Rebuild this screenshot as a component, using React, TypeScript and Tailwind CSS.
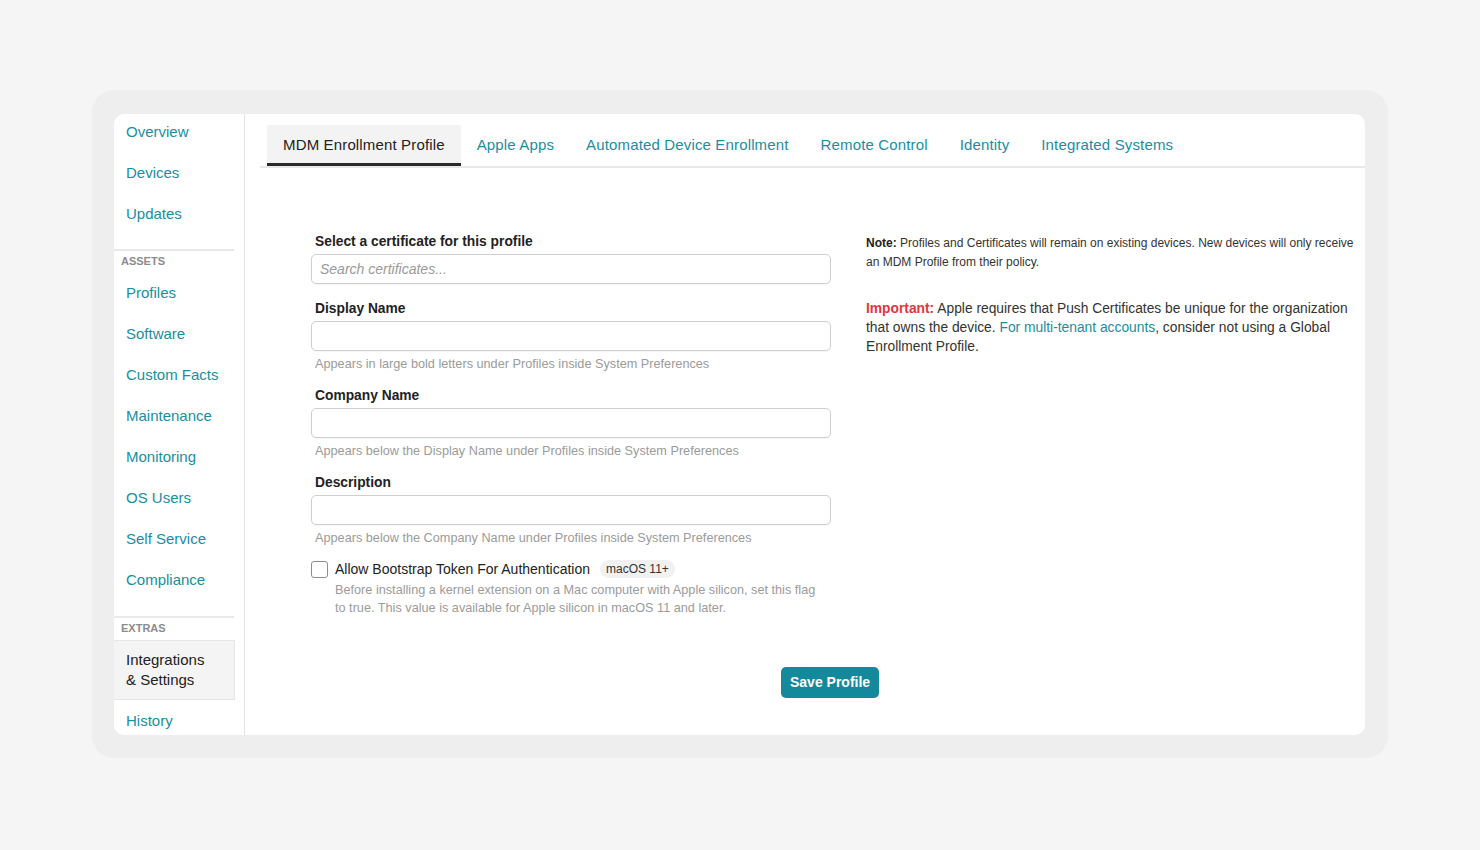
import React from 'react';

const navTop = ['Overview', 'Devices', 'Updates'];
const navAssets = ['Profiles', 'Software', 'Custom Facts', 'Maintenance', 'Monitoring', 'OS Users', 'Self Service', 'Compliance'];
const tabs = ['MDM Enrollment Profile', 'Apple Apps', 'Automated Device Enrollment', 'Remote Control', 'Identity', 'Integrated Systems'];

const NavItem: React.FC<{ label: string }> = ({ label }) => (
  <a className="block pl-3 text-[15px] leading-[18px] text-[#1a8ea1]">{label}</a>
);

const Field: React.FC<{ label: string; placeholder?: string; help?: string; className?: string }> = ({ label, placeholder, help, className }) => (
  <div className={className}>
    <div className="pl-1 text-[13.8px] leading-[18px] font-bold text-[#222]">{label}</div>
    <input
      placeholder={placeholder}
      className="mt-[3px] block h-[30px] w-full rounded-[5px] border border-[#cfcfcf] px-2 text-[14px] italic text-[#333] placeholder:text-[#9a9a9a] shadow-[0_1px_1px_rgba(0,0,0,0.04)] outline-none"
    />
    {help && <div className="mt-[5px] pl-1 text-[12.7px] leading-[16px] text-[#9b9b9b]">{help}</div>}
  </div>
);

export default function App() {
  return (
    <div className="min-h-[850px] bg-[#f5f5f6] pt-[90px] font-['Liberation_Sans',Arial,sans-serif]">
      <div className="ml-[92px] w-[1296px] h-[668px] rounded-[22px] bg-[#eeeeef] pt-[24px] pl-[22px] pr-[23px]">
        <div className="flex h-[621px] overflow-hidden rounded-[10px] bg-white">
          {/* sidebar */}
          <aside className="w-[131px] shrink-0 border-r border-[#e3e3e3] pt-[9px]">
            <div className="flex flex-col gap-[23px]">
              {navTop.map((n) => <NavItem key={n} label={n} />)}
            </div>
            <div className="mt-[26px] mr-[10px] h-[2px] bg-[#e9e9e9]" />
            <div className="mt-[4px] pl-[7px] text-[11px] leading-[12px] font-bold text-[#8c8c8c]">ASSETS</div>
            <div className="mt-[17px] flex flex-col gap-[23px]">
              {navAssets.map((n) => <NavItem key={n} label={n} />)}
            </div>
            <div className="mt-[27px] mr-[10px] h-[2px] bg-[#e9e9e9]" />
            <div className="mt-[4px] pl-[7px] text-[11px] leading-[12px] font-bold text-[#8c8c8c]">EXTRAS</div>
            <div className="mt-[6px] mr-[9px] h-[60px] border border-l-0 border-[#e6e6e6] bg-[#f4f4f5] pl-3 pt-[9px] text-[15px] leading-[20px] text-[#222]">
              Integrations<br />& Settings
            </div>
            <div className="mt-[12px]">
              <NavItem label="History" />
            </div>
          </aside>

          {/* main */}
          <main className="flex-1 pl-[15px]">
            <div className="mt-[11px] flex border-b-2 border-[#e8e8e8] pl-[7px]">
              {tabs.map((t, i) => (
                <div
                  key={t}
                  className={
                    i === 0
                      ? 'h-[41px] -mb-[2px] border-b-[3px] border-[#2b2b2b] bg-[#f3f3f4] px-4 pt-[11px] text-[15px] leading-[18px] tracking-[0.15px] text-[#222]'
                      : 'h-[41px] px-4 pt-[11px] text-[15px] leading-[18px] tracking-[0.15px] text-[#1a8ea1]'
                  }
                >
                  {t}
                </div>
              ))}
            </div>

            <div className="flex pt-[65px]">
              <div className="ml-[51px] w-[520px]">
                <Field label="Select a certificate for this profile" placeholder="Search certificates..." />
                <Field className="mt-[16px]" label="Display Name" help="Appears in large bold letters under Profiles inside System Preferences" />
                <Field className="mt-[15px]" label="Company Name" help="Appears below the Display Name under Profiles inside System Preferences" />
                <Field className="mt-[15px]" label="Description" help="Appears below the Company Name under Profiles inside System Preferences" />

                <div className="mt-[14px] flex items-start gap-[7px]">
                  <span className="mt-[1px] h-[17px] w-[17px] shrink-0 rounded-[3px] border border-[#8d8d8d] bg-white" />
                  <div>
                    <div className="flex items-center gap-[10px]">
                      <span className="text-[14px] leading-[18px] text-[#222]">Allow Bootstrap Token For Authentication</span>
                      <span className="rounded-full bg-[#f1f1f2] px-[6px] text-[12px] leading-[18px] text-[#333]">macOS 11+</span>
                    </div>
                    <div className="mt-[3px] pr-1 text-[12.7px] leading-[18px] text-[#9b9b9b]">
                      Before installing a kernel extension on a Mac computer with Apple silicon, set this flag to true. This value is available for Apple silicon in macOS 11 and later.
                    </div>
                  </div>
                </div>
              </div>

              <div className="ml-[35px] w-[494px] pt-[1px]">
                <p className="text-[12px] leading-[19px] text-[#333]">
                  <span className="font-bold text-[#222]">Note:</span> Profiles and Certificates will remain on existing devices. New devices will only receive an MDM Profile from their policy.
                </p>
                <p className="mt-[27px] text-[13.8px] leading-[19px] text-[#333]">
                  <span className="font-bold text-[#e2353c]">Important:</span> Apple requires that Push Certificates be unique for the organization that owns the device.{' '}
                  <a className="text-[#1a8ea1]">For multi-tenant accounts</a>, consider not using a Global Enrollment Profile.
                </p>
              </div>
            </div>

            <div className="mt-[50px] pl-[521px]">
              <button className="h-[31px] rounded-[5px] bg-[#14899b] px-[9px] text-[14px] font-bold text-white">Save Profile</button>
            </div>
          </main>
        </div>
      </div>
    </div>
  );
}
